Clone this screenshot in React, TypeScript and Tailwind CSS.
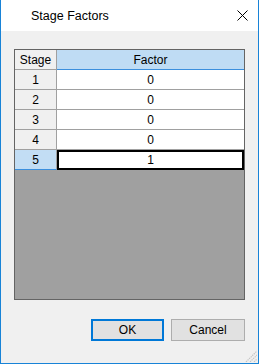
const rows = [
  { stage: 1, factor: '0' },
  { stage: 2, factor: '0' },
  { stage: 3, factor: '0' },
  { stage: 4, factor: '0' },
  { stage: 5, factor: '1' },
]

export default function App() {
  const selected = 5

  return (
    <div
      className="w-[259px] h-[364px] flex flex-col border-x border-b border-[#1883d7] bg-[#f0f0f0] text-[12px] text-black"
      style={{ fontFamily: '"Liberation Sans", "Noto Sans", sans-serif' }}
    >
      {/* title bar */}
      <div className="h-[31px] shrink-0 bg-white flex items-center pl-[30px] pr-[10px]">
        <span className="flex-1 pt-[2px] text-[12.5px]">Stage Factors</span>
        <svg width="11" height="11" viewBox="0 0 11 11" className="mb-[1px]">
          <path d="M0.5 0.5 L10.5 10.5 M10.5 0.5 L0.5 10.5" stroke="#000" strokeWidth="1" />
        </svg>
      </div>

      <div className="flex-1 flex flex-col px-[13px] pt-[18px] relative">
        {/* grid */}
        <div className="h-[251px] border border-[#646464] flex flex-col bg-[#a0a0a0]">
          <div className="flex h-[20px]">
            <div className="w-[42px] bg-[#f0f0f0] border-r border-b border-[#a0a0a0] flex items-center justify-center">
              Stage
            </div>
            <div className="flex-1 bg-[#bfdcf4] border-b border-[#3b8fdd] flex items-center justify-center">
              Factor
            </div>
          </div>
          {rows.map((r) => {
            const sel = r.stage === selected
            return (
              <div key={r.stage} className="flex h-[20px]">
                <div
                  className={
                    sel
                      ? 'w-[42px] bg-[#c2ddf4] border-r border-b border-r-[#a0a0a0] border-b-[#3b8fdd] flex items-center justify-center'
                      : 'w-[42px] bg-[#f0f0f0] border-r border-b border-[#a0a0a0] flex items-center justify-center'
                  }
                >
                  {r.stage}
                </div>
                <div
                  className={
                    sel
                      ? 'flex-1 bg-white border-2 border-black flex items-center justify-center'
                      : 'flex-1 bg-white border-b border-[#a0a0a0] flex items-center justify-center'
                  }
                >
                  {r.factor}
                </div>
              </div>
            )
          })}
        </div>

        {/* buttons */}
        <div className="flex justify-end gap-[7px] mt-[19px]">
          <button className="w-[73px] h-[22px] bg-[#e1e1e1] border-2 border-[#0078d7] flex items-center justify-center">
            OK
          </button>
          <button className="w-[74px] h-[22px] bg-[#e1e1e1] border border-[#adadad] flex items-center justify-center">
            Cancel
          </button>
        </div>

        {/* resize grip */}
        <svg width="12" height="12" viewBox="0 0 12 12" className="absolute right-[1px] bottom-[1px]">
          <path d="M1 12 L12 1 M5 12 L12 5 M9 12 L12 9" stroke="#c4c4c4" strokeWidth="1.2" strokeDasharray="1.4 0.8" />
        </svg>
      </div>
    </div>
  )
}
